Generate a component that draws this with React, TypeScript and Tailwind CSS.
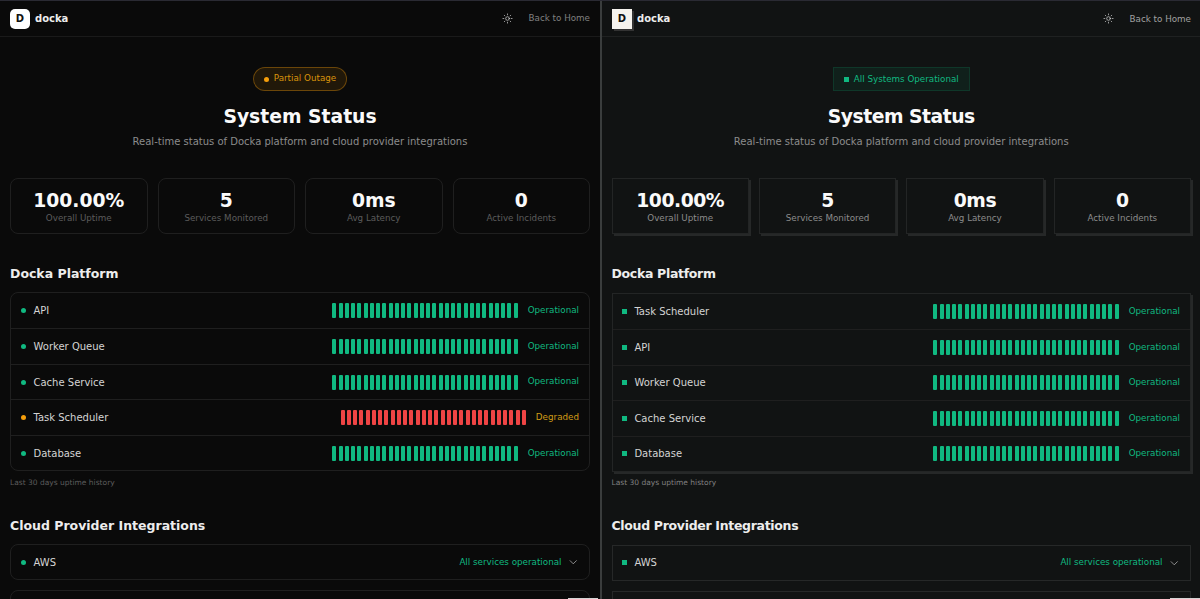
import { ChevronDown, Sun } from "lucide-react";

type Row = { name: string; status: "ok" | "bad" };

const leftRows: Row[] = [
  { name: "API", status: "ok" },
  { name: "Worker Queue", status: "ok" },
  { name: "Cache Service", status: "ok" },
  { name: "Task Scheduler", status: "bad" },
  { name: "Database", status: "ok" },
];

const rightRows: Row[] = [
  { name: "Task Scheduler", status: "ok" },
  { name: "API", status: "ok" },
  { name: "Worker Queue", status: "ok" },
  { name: "Cache Service", status: "ok" },
  { name: "Database", status: "ok" },
];

const stats = [
  ["100.00%", "Overall Uptime"],
  ["5", "Services Monitored"],
  ["0ms", "Avg Latency"],
  ["0", "Active Incidents"],
];

const days = Array.from({ length: 30 }, (_, i) => i);

const Bars = ({ bad }: { bad: boolean }) => (
  <div className="flex gap-[2.25px]">
    {days.map((d) => (
      <div key={d} className={`h-[15px] w-[4px] rounded-[1px] ${bad ? "bg-[#ef4444]" : "bg-[#10b981]"}`} />
    ))}
  </div>
);

const Panel = ({ square }: { square: boolean }) => {
  const rows = square ? rightRows : leftRows;
  const box = square
    ? "border border-[#232525] shadow-[2px_2px_0_#262828]"
    : "rounded-[8px] border border-[#1f1f1f]";
  const plainBox = square ? "border border-[#262828]" : "rounded-[8px] border border-[#1f1f1f]";
  const dot = square ? "size-[5px] bg-[#10b981]" : "size-[5px] rounded-full bg-[#10b981]";
  const tracking = square ? "tracking-tight" : "";
  const rowPad = square ? "pl-[9.4px] pr-[10px]" : "px-[10px]";

  return (
    <div className={`relative h-[599px] overflow-hidden ${square ? "w-[598px] bg-[#111313] pl-[9.5px] pr-[9px]" : "w-[600px] bg-[#0a0a0a] px-[10px]"}`}>
      <header className={`flex items-center justify-between border-b ${square ? "-ml-[9.5px] -mr-[9px] h-[36.4px] border-[#1f2121] pl-[10px] pr-[9px]" : "-mx-[10px] h-[36px] border-[#1a1a1a] px-[10px]"}`}>
        <div className="flex items-center gap-[5px]">
          {square ? (
            <div className="flex size-[20px] items-center justify-center bg-[#f5f3ee] text-[10px] font-bold text-[#111111] shadow-[2px_2px_0_#333]">D</div>
          ) : (
            <div className="flex size-[20px] items-center justify-center rounded-[5px] bg-white text-[10px] font-bold text-[#111111]">D</div>
          )}
          <span className="text-[10px] font-bold text-[#ededed]">docka</span>
        </div>
        <div className="flex items-center gap-[16px]">
          <Sun className="size-[11px] text-[#e5e5e5]" strokeWidth={1.4} />
          <span className={`mt-[1px] text-[8.75px] ${square ? "text-[#a1a1a1]" : "text-[#808080]"}`}>Back to Home</span>
        </div>
      </header>

      <div className="flex flex-col items-center pt-[30px]">
        {square ? (
          <div className="flex h-[24px] items-center gap-[5px] border border-[#10b981]/15 bg-[#10b981]/8 px-[10px] text-[8.75px] text-[#10b981]">
            <span className="size-[5px] bg-[#10b981]" />
            All Systems Operational
          </div>
        ) : (
          <div className="flex h-[24px] items-center gap-[5px] rounded-full border border-[#f59e0b]/35 bg-[#f59e0b]/10 px-[10px] text-[8.75px] text-[#d9930b]">
            <span className="size-[5px] rounded-full bg-[#f59e0b]" />
            Partial Outage
          </div>
        )}
        <h1 className={`mt-[15px] text-[18.75px] font-bold leading-[22.5px] text-[#fafafa] ${tracking}`}>System Status</h1>
        <p className="mt-[5px] text-[10px] leading-[15px] text-[#8c8c8c]">Real-time status of Docka platform and cloud provider integrations</p>
      </div>

      <div className="mt-[29.5px] grid grid-cols-4 gap-[10px]">
        {stats.map(([value, label]) => (
          <div key={label} className={`flex h-[56px] flex-col items-center justify-center pt-[2px] ${box}`}>
            <div className={`text-[18.75px] font-bold leading-[22.5px] text-[#fafafa] ${tracking}`}>{value}</div>
            <div className={`text-[8.75px] leading-[12.5px] ${square ? "text-[#8c8c8c]" : "text-[#5c5c5c]"}`}>{label}</div>
          </div>
        ))}
      </div>

      <h2 className={`mt-[31px] text-[12.5px] font-bold leading-[17.5px] text-[#ededed] ${tracking}`}>Docka Platform</h2>
      <div className={`${square ? "mt-[10px]" : "mt-[9.5px]"} ${box}`}>
        {rows.map((row, i) => (
          <div
            key={row.name}
            className={`flex items-center justify-between ${rowPad} ${i > 0 ? "border-t border-[#1f1f1f]" : ""} ${i === 0 || i === 4 ? "h-[35px]" : "h-[35.7px]"}`}
          >
            <div className="flex items-center gap-[7.5px]">
              <span className={row.status === "bad" ? "size-[5px] rounded-full bg-[#f59e0b]" : dot} />
              <span className="text-[10px] text-[#d4d4d4]">{row.name}</span>
            </div>
            <div className="flex items-center gap-[10px]">
              <Bars bad={row.status === "bad"} />
              <span className={`text-[8.75px] ${row.status === "bad" ? "text-[#d19a16]" : "text-[#10b981]"}`}>
                {row.status === "bad" ? "Degraded" : "Operational"}
              </span>
            </div>
          </div>
        ))}
      </div>
      <p className={`${square ? "mt-[6.5px]" : "mt-[7px]"} text-[7.5px] leading-[10px] ${square ? "text-[#808080]" : "text-[#5c5c5c]"}`}>Last 30 days uptime history</p>

      <h2 className={`mt-[29px] text-[12.5px] font-bold leading-[17.5px] text-[#ededed] ${tracking}`}>Cloud Provider Integrations</h2>
      <div className={`${square ? "mt-[10px]" : "mt-[9.5px]"} flex h-[36px] items-center justify-between ${rowPad} ${plainBox}`}>
        <div className="flex items-center gap-[7.5px]">
          <span className={dot} />
          <span className="text-[10px] text-[#d4d4d4]">AWS</span>
        </div>
        <div className="flex items-center gap-[5px]">
          <span className="text-[8.75px] text-[#10b981]">All services operational</span>
          <ChevronDown className="size-[12.5px] text-[#b0b0b0]" strokeWidth={1.5} />
        </div>
      </div>
      <div className={`mt-[10px] h-[36px] ${plainBox}`} />

      {/* bouton flottant coupé en bas de page */}
      <div className={`absolute top-[597px] h-[24px] w-[30px] border border-[#d4d4d4] bg-[#222222] ${square ? "right-0" : "right-[2px]"}`} />
    </div>
  );
};

export default function App() {
  return (
    <div className="flex h-[599px] w-[1200px] overflow-hidden border-t border-[#2a2a33] font-['DejaVu_Sans',sans-serif]">
      <Panel square={false} />
      <div className="w-[2px] bg-[#3a3d3d]" />
      <Panel square />
    </div>
  );
}
